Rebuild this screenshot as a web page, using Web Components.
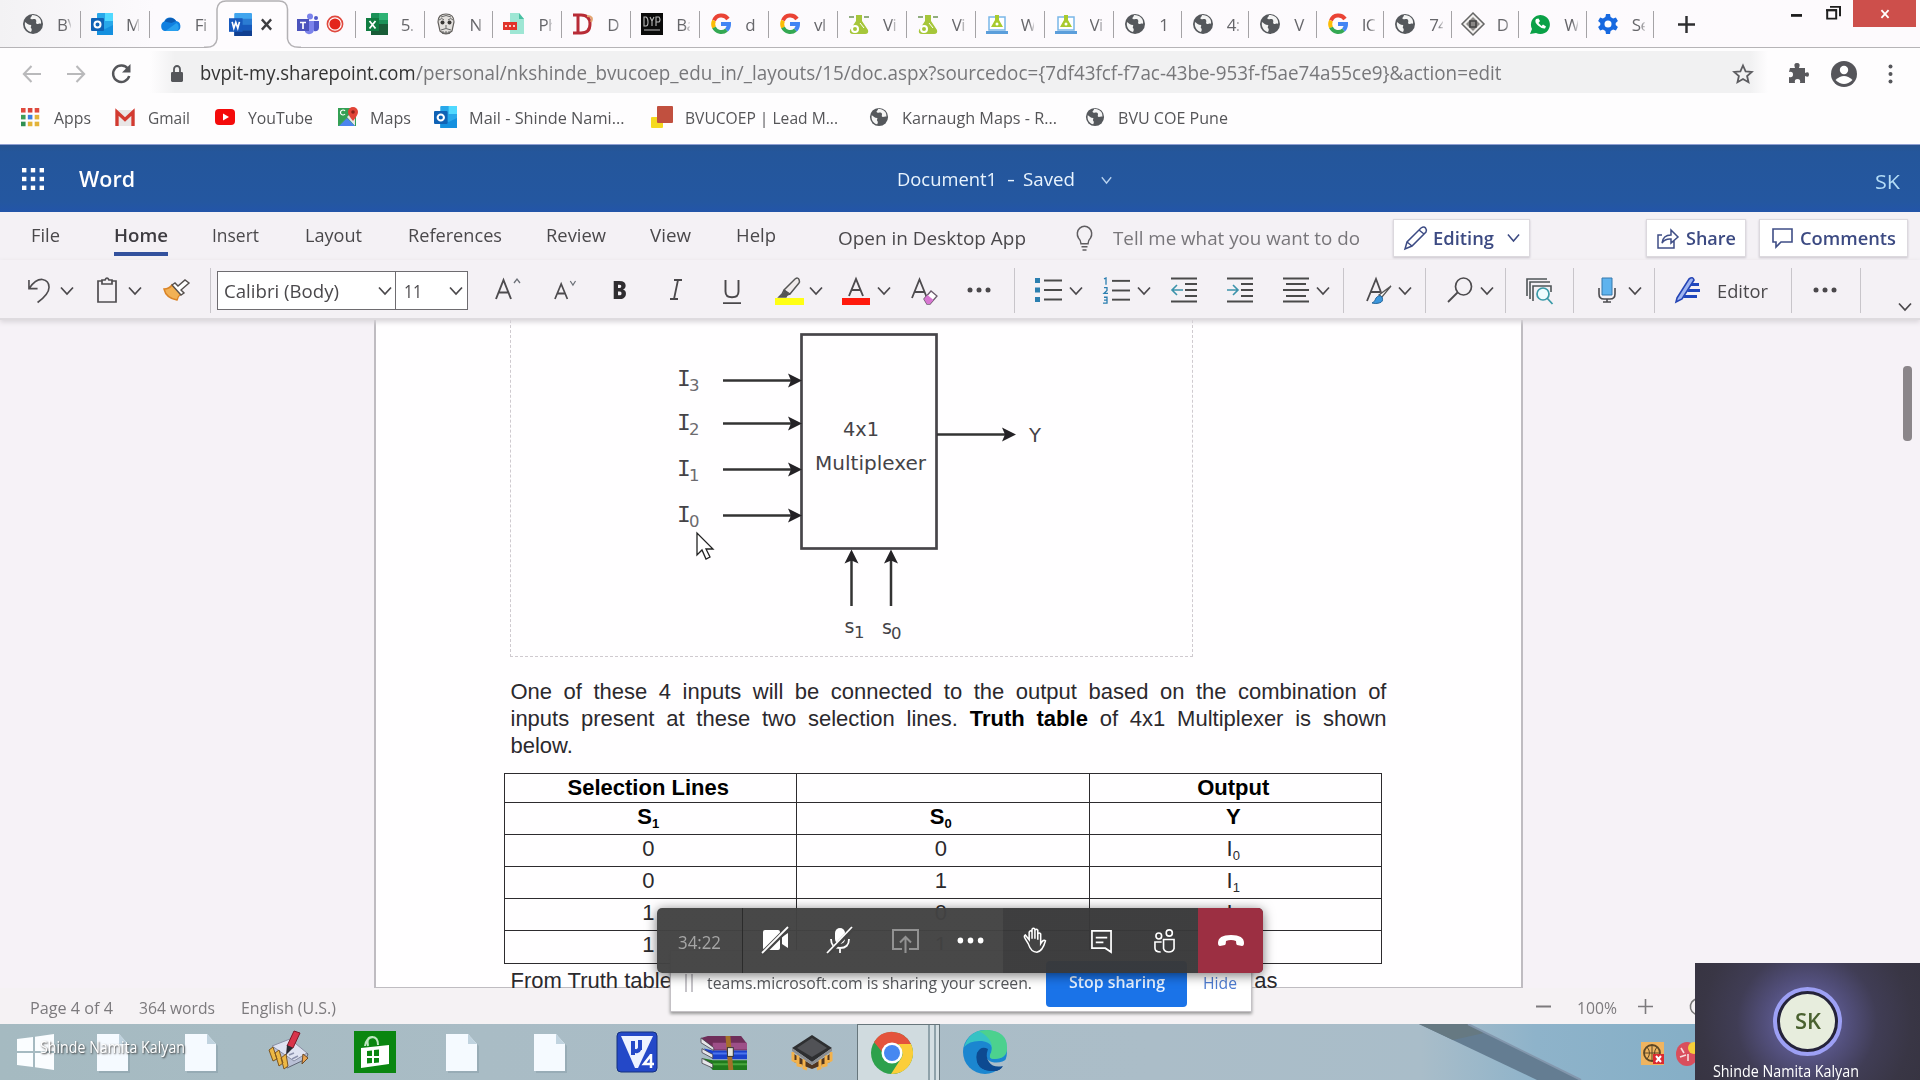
<!DOCTYPE html>
<html lang="en">
<head>
<meta charset="utf-8">
<title>Document1 - Word</title>
<style>
html,body{margin:0;padding:0;width:1920px;height:1080px;overflow:hidden;background:#f5f1f5}
body{font-family:"Open Sans","Noto Sans",sans-serif}
</style>
</head>
<body>
<desktop-screen></desktop-screen>
<script>
/* Icon artwork: [viewBox width, viewBox height, markup] */
const chev='<path d="M1 1.5L7 8L13 1.5" fill="none" stroke="currentColor" stroke-width="1.7"/>';
const lines=(x,w,c='#4a4a4a')=>`<g stroke="${c}" stroke-width="2">`+w.map((l,i)=>`<path d="M${x+(l[0]||0)} ${l[1]}h${l[2]}"/>`).join('')+'</g>';
const globe='<circle cx="11" cy="11" r="10" fill="#55585c"/><path d="M3 9c2 1 3 3 6 3 1 1-1 2 0 3 1 1 1 2 0 4-4-1-7-5-6-10zM10 2c0 2-3 3-1 4 2 1 4-1 5 1s-1 3 1 4c2 0 3-1 4 0 1-5-3-9-9-9z" fill="#f4f4f4"/>';
const google='<g fill="none" stroke-width="4"><path d="M18 6A8 8 0 0 0 4 7.500" stroke="#ea4335"/><path d="M4 7.500a8 8 0 0 0 0 7" stroke="#fbbc05"/><path d="M4 14.500A8 8 0 0 0 16.500 17" stroke="#34a853"/><path d="M16.500 17A8 8 0 0 0 19 11h-8" stroke="#4285f4"/></g>';
const outlook='<rect x="6" y="0" width="16" height="22" rx="1" fill="#28a8ea"/><path d="M14 0h8v8h-8z" fill="#50d9ff"/><path d="M6 12l8 4 8-4v10H6z" fill="#1490df"/><rect x="0" y="5" width="13" height="13" rx="1" fill="#0f62b5"/><circle cx="6.500" cy="11.500" r="3" fill="none" stroke="#fff" stroke-width="2"/>';
const flask='<path d="M8 2h6v6l6 9q1 4-3 4H5q-4 0-3-4l6-9z" fill="#a6c63a"/><path d="M1 4h5M16 4h5" stroke="#6d9455" stroke-width="1.500"/><circle cx="7" cy="16" r="3" fill="none" stroke="#fff" stroke-width="2"/><path d="M12 10l4 5" stroke="#fff"/>';
const laptop='<rect x="3" y="4" width="16" height="13" fill="#fff" stroke="#79b7e8" stroke-width="1.500"/><path d="M0 18h22v3H0z" fill="#5b9edb"/><path d="M9 2h4v5l4 7H5l4-7z" fill="#a8ca2e"/><circle cx="11" cy="11" r="1.500" fill="#fff"/>';
const doc='<path d="M2 2h22l9 10v27H2z" fill="#8298a5" opacity=".45"/><path d="M0 0h22l9 10v27H0z" fill="#f5faff"/><path d="M22 0v10h9z" fill="#c0d3df"/>';
const ICONS={
 globe:[22,22,globe], google:[22,22,google], outlook:[22,22,outlook], flask:[22,22,flask], laptop:[22,22,laptop],
 onedrive:[24,22,'<path d="M5 18a5 5 0 0 1-.5-9.500A7.500 7.500 0 0 1 17.500 8 5.200 5.200 0 0 1 19 18z" fill="#0f7fe0"/><path d="M5 8.500a7.500 7.500 0 0 1 12.500-.5l-5 2z" fill="#0b5cb4"/><path d="M6 18l12-8a5.200 5.200 0 0 1 1 8z" fill="#28a0ee"/>'],
 word:[22,22,'<rect x="5" width="17" height="22" rx="1" fill="#41a5ee"/><path d="M5 5.500h17V11H5z" fill="#2b7cd3"/><path d="M5 11h17v5.500H5z" fill="#185abd"/><path d="M5 16.500h17V22H5z" fill="#103f91"/><rect y="5" width="13" height="13" fill="#185abd"/><path d="M3 8.500l1.600 6 1.900-5.500 1.900 5.500 1.600-6" fill="none" stroke="#fff" stroke-width="1.600"/>'],
 teams:[22,22,'<circle cx="13" cy="3.500" r="3" fill="#7b83eb"/><circle cx="19" cy="5" r="2" fill="#5059c9"/><path d="M8 8h9v9a5 5 0 0 1-9 2z" fill="#7b83eb"/><path d="M17 8h5v7q-1 4-5 3z" fill="#5059c9"/><rect y="6" width="12" height="12" fill="#4b53bc"/><path d="M3 9.500h6M6 9.500v6.500" stroke="#fff" stroke-width="1.700"/>'],
 rec:[18,18,'<circle cx="9" cy="9" r="7.600" fill="#fff" stroke="#e0483e" stroke-width="1.600"/><circle cx="9" cy="9" r="5.600" fill="#e3261c"/>'],
 excel:[22,22,'<rect x="5" width="17" height="22" rx="1" fill="#1b9158"/><path d="M13 0h9v7h-9z" fill="#2eb274"/><path d="M5 11h17v11H5z" fill="#185c37"/><rect y="5" width="13" height="13" fill="#107c41"/><path d="M3.500 8l6 7.500M9.500 8l-6 7.500" stroke="#fff" stroke-width="1.800"/>'],
 face:[22,22,'<path d="M3 9q0-8 8-8t8 8l-2 9q-6 6-12 0z" fill="#e4e1de" stroke="#625f5c" stroke-width="1.200"/><circle cx="7.500" cy="9.500" r="2" fill="#3a3836"/><circle cx="14.500" cy="9.500" r="2" fill="#3a3836"/><path d="M11 12v3M6 17q5-3 10 0M7 20h8M6 4q5-3 10 0M4 7q3-3 5 0M13 7q3-3 5 0M8 18v3M11 18v3M14 18v3" fill="none" stroke="#666" stroke-width="1"/>'],
 pdf:[22,22,'<path d="M7 0h9l5 6v15H7z" fill="#9ee6d4"/><path d="M16 0l5 6h-5z" fill="#49bfa2"/><rect y="9" width="14" height="8" fill="#e1342b"/><path d="M2 13h2M6 13h2M10 13h2" stroke="#fff" stroke-width="1.500"/>'],
 bigD:[22,22,'<path d="M1 2h8q9 0 9 9t-9 9H1M6 2v18" fill="none" stroke="#b82b36" stroke-width="3"/><path d="M15 3q7 0 4 6" fill="none" stroke="#e2a36f" stroke-width="2"/>'],
 dyp:[22,22,'<rect width="22" height="22" fill="#0a0a0a"/><path d="M3 4v9h2q2 0 2-4t-2-5zM9 4l2 4 2-4M11 8v5M15 13V4h3q2 3 0 5h-3M3 17h16" stroke="#b9b9b9" fill="none" stroke-width="1.100"/>'],
 diamond:[22,22,'<path d="M11 0l11 11-11 11L0 11z" fill="#f1efee" stroke="#666" stroke-width="1.500"/><path d="M11 4l7 7-7 7-7-7z" fill="#8a8886"/><path d="M8 8h6v6H8z" fill="none" stroke="#444" stroke-width="1.600"/>'],
 whatsapp:[22,22,'<path d="M1 21l2-5a9.500 9.500 0 1 1 4 4z" fill="#0aa147"/><path d="M7 6q-2 3 2 6.500t7 3l1-2-3-2-1.500 1.500-3-3L11 8 9.500 5.500z" fill="#fff"/>'],
 gear:[22,22,'<path d="M9 1h4l.6 3 2.500 1.400 2.800-1 2 3.500L18.700 10v2l2.200 2-2 3.600-2.800-1-2.500 1.400-.6 3H9l-.6-3-2.500-1.400-2.800 1-2-3.500L3.300 12v-2L1.100 8l2-3.600 2.800 1L8.400 4z" fill="#1769e0"/><circle cx="11" cy="11" r="3.500" fill="#fff"/>'],
 plus:[18,18,'<path d="M9 0v18M0 9h18" stroke="currentColor" stroke-width="2.600"/>'],
 plusThin:[15,15,'<path d="M7.500 0v15M0 7.500h15" stroke="currentColor" stroke-width="1.600"/>'],
 close:[14,14,'<path d="M2 1.500l10 11M12 1.500L2 12.500" stroke="currentColor" stroke-width="2.500"/>'],
 min:[12,12,'<path d="M0 7h12" stroke="#1b1b1b" stroke-width="3"/>'],
 restore:[15,15,'<path d="M1.200 4.500h9v9h-9zM4 1h10v10" fill="none" stroke="#1f1f1f" stroke-width="2"/><path d="M0 4.500h11" stroke="#1f1f1f" stroke-width="2"/>'],
 back:[20,20,'<path d="M20 10H2M10 2l-8 8 8 8" fill="none" stroke="#b9b9bb" stroke-width="2.200"/>'],
 fwd:[20,20,'<path d="M0 10h18M10 2l8 8-8 8" fill="none" stroke="#b9b9bb" stroke-width="2.200"/>'],
 reload:[20,20,'<path d="M17 5a8.200 8.200 0 1 0 1.200 7" fill="none" stroke="#55565a" stroke-width="2.500"/><path d="M19.500 0v8.500H11z" fill="#55565a"/>'],
 lock:[12,16,'<path d="M3 7V4a3 3 0 0 1 6 0v3" fill="none" stroke="#54565a" stroke-width="1.800"/><rect y="6.500" width="12" height="9.500" rx="1.300" fill="#54565a"/>'],
 star:[20,20,'<path d="M10 1.500l2.600 5.800 6.200.6-4.700 4.100 1.400 6.200L10 15l-5.500 3.200 1.400-6.200L1.200 7.900l6.200-.6z" fill="none" stroke="#5c5c60" stroke-width="1.800"/>'],
 puzzle:[21,21,'<path d="M2 5h5q-2-5 2-5t2 5h6v5q4-2 4 1.500T17 13v7h-5q1-4-2.500-4T7 20H1v-6q4 1 4-2.500T1 9z" fill="#59595d"/>'],
 person:[26,26,'<circle cx="13" cy="13" r="13" fill="#55555a"/><circle cx="13" cy="9" r="4.200" fill="#fff"/><path d="M4.500 19q8.500-8 17 0-8.500 8-17 0z" fill="#fff"/>'],
 vdots:[5,20,'<g fill="#55565a"><circle cx="2.500" cy="2.500" r="2"/><circle cx="2.500" cy="10" r="2"/><circle cx="2.500" cy="17.500" r="2"/></g>'],
 apps:[20,20,['#e04b3f','#d9453b','#e04b3f','#3f9d58','#3c7fe0','#e3b33a','#2f8f52','#e3b33a','#e3b33a'].map((c,i)=>`<rect x="${(i%3)*7.200}" y="${(i/3|0)*7.200}" width="4.800" height="4.800" fill="${c}"/>`).join('')],
 gmail:[20,16,'<rect width="20" height="16" rx="1" fill="#e9e6e6"/><path d="M2 16V2l8 7.500L18 2v14" fill="none" stroke="#d33a30" stroke-width="3.300"/>'],
 youtube:[20,16,'<rect width="20" height="16" rx="4" fill="#f40b0b"/><path d="M8 4.500v7l6-3.500z" fill="#fff"/>'],
 maps:[20,20,'<rect y="1" width="18" height="18" fill="#34a054"/><path d="M0 19L17 2v17L9 10z" fill="#e6e6e6"/><path d="M1 19l8-8 8 8z" fill="#4c84ee"/><path d="M15 14q-5-6-5-9a5 5 0 0 1 10 0q0 3-5 9z" fill="#e14437"/><circle cx="15" cy="5" r="1.800" fill="#8c2119"/><path d="M7 4a2.500 2.500 0 1 0 0 3" fill="none" stroke="#fff" stroke-width="1.200"/>'],
 lead:[22,22,'<rect y="11" width="12" height="11" rx="1" fill="#f5d91f"/><rect x="6" width="16" height="17" rx="1" fill="#c1503f"/>'],
 waffle:[22,22,[0,1,2,3,4,5,6,7,8].map(i=>`<rect x="${(i%3)*8.800}" y="${(i/3|0)*8.800}" width="4.400" height="4.400" fill="#fff"/>`).join('')],
 chev:[14,9,chev],
 bulb:[17,24,'<path d="M5 17q0-3-2.500-5.500A7.200 7.200 0 1 1 14.500 11.500Q12 14 12 17zM5.500 20h6M6.500 23h4" fill="none" stroke="#5f5d60" stroke-width="1.500"/>'],
 pencil:[23,24,'<path d="M1 23l2-7L17 2q3-2 4.500 0t.5 4L8 20zM3 16l5 4M15 4l5 4" fill="none" stroke="#3c4b84" stroke-width="1.500"/>'],
 share:[22,22,'<path d="M5 8H1v13h16v-7M5 16q1-8 9-8V3l7 7-7 6v-4q-6-.5-9 4z" fill="none" stroke="#3f4e86" stroke-width="1.500"/>'],
 comment:[21,20,'<path d="M1 1h19v13H9l-5 5v-5H1z" fill="none" stroke="#3f4e86" stroke-width="1.600"/>'],
 undo:[23,26,'<path d="M1 2v9h9M1.500 10.500Q8 1 15 1.500q7 1 7 8 0 7-12 16" fill="none" stroke="#4f4d50" stroke-width="1.700"/>'],
 clip:[20,26,'<path d="M5 4H1v21h18V4h-4M5 7V3h3q2-4 4 0h3v4z" fill="none" stroke="#4f4d50" stroke-width="1.700"/>'],
 brush:[27,22,'<path d="M1 10q5 0 8-4l9 9q-3 2-4 6Q3 19 1 10z" fill="#f2b155" stroke="#da8427" stroke-width="1.500"/><path d="M9 6l3-2 3 3 7-6 4 3-8 7 3 3-3 2z" fill="#fff" stroke="#55504e" stroke-width="1.400"/>'],
 bigA:[25,22,'<path d="M1 21L8.500 2 16 21M3.500 14.500h10" fill="none" stroke="#4d4b4e" stroke-width="1.900"/><path d="M19 5l3-4 3 4" fill="none" stroke="#6b7077" stroke-width="1.300"/>'],
 smallA:[23,20,'<path d="M1 19L7.500 4 14 19M3.500 13.500h8" fill="none" stroke="#4d4b4e" stroke-width="1.800"/><path d="M17 1l2.800 4L22.500 1" fill="none" stroke="#6b7077" stroke-width="1.300"/>'],
 ital:[12,21,'<path d="M4 1h8M0 20h8M8 1L4 20" fill="none" stroke="#4a484b" stroke-width="1.800"/>'],
 under:[18,26,'<path d="M2.500 1v12q0 6 6.500 6t6.500-6V1M0 25h18" fill="none" stroke="#4a484b" stroke-width="1.900"/>'],
 hilite:[29,28,'<path d="M9 13L20 2q3-2 4 .5T24 6L15 17zM9 13l-2 4-3 3h7l1-2 3-1" fill="#efeaea" stroke="#555" stroke-width="1.500"/><path d="M10 13l-5 7h6l3-3z" fill="#555"/><path d="M0 21h29v7H0z" fill="#ffff14"/>'],
 fcolor:[28,28,'<path d="M7 19L14 2l7 17M9.500 13h9" fill="none" stroke="#4d4b4e" stroke-width="1.900"/><path d="M0 21h28v7H0z" fill="#ff1a0d"/>'],
 clearf:[27,27,'<path d="M1 20L8.500 1.500 16 20M3.500 14h10" fill="none" stroke="#4d4b4e" stroke-width="1.800"/><path d="M13 21l7-8 6 5-7 8h-3z" fill="#fff" stroke="#6b5b6c" stroke-width="1.300"/><path d="M13 21l3.500-4 6 5-3.500 4h-3z" fill="#d877d2"/>'],
 dots:[24,6,'<g fill="currentColor"><circle cx="3" cy="3" r="2.500"/><circle cx="12" cy="3" r="2.500"/><circle cx="21" cy="3" r="2.500"/></g>'],
 bullets:[27,24,'<g fill="#2b7fb0"><path d="M0 0h5v5H0zM0 9.500h5v5H0zM0 19h5v5H0z"/></g>'+lines(9,[[0,2.5,18],[0,12,18],[0,21.5,18]])],
 numbers:[27,28,'<g fill="none" stroke="#2b7fb0" stroke-width="1.300"><path d="M1 2l2-1v7M1 11h3v3l-3 3h4M1 21h3v3H1m3 0v3H0"/></g>'+lines(9,[[0,4,18],[0,14,18],[0,23.5,18]])],
 outdent:[26,26,lines(0,[[0,1.5,26],[14,7,12],[14,13,12],[14,19,12],[0,24.5,26]])+'<path d="M12 13H1M6 8l-5 5 5 5" fill="none" stroke="#3c93ab" stroke-width="1.600"/>'],
 indent:[26,26,lines(0,[[0,1.5,26],[14,7,12],[14,13,12],[14,19,12],[0,24.5,26]])+'<path d="M0 13h11M6 8l5 5-5 5" fill="none" stroke="#3c93ab" stroke-width="1.600"/>'],
 align:[26,26,lines(0,[[0,1.5,26],[3,7,20],[0,13,26],[3,19,20],[0,24.5,26]])],
 styles:[26,28,'<path d="M1 24L10 2l6 16M5 15h9" fill="none" stroke="#4d4b4e" stroke-width="1.800"/><path d="M25 9l-9 11-3-2z" fill="#fff" stroke="#555" stroke-width="1.300"/><path d="M6 26q3-1 4-5 3-4 6-1 2 5-3 6-3 1-7 0z" fill="#3b97dd" stroke="#26679c"/>'],
 search:[25,26,'<ellipse cx="16.500" cy="9.500" rx="8" ry="8.500" fill="none" stroke="#4d4b4e" stroke-width="1.700"/><path d="M10.500 15.500L1 25" stroke="#4d4b4e" stroke-width="1.800"/>'],
 finddoc:[27,27,'<path d="M1 18V1h20M4 21V4h20M7 23V8h18v6" fill="none" stroke="#4f5558" stroke-width="1.600"/><circle cx="17" cy="16" r="6" fill="#eefcff" stroke="#3a9aa8" stroke-width="1.700"/><path d="M21 20l5.500 6" stroke="#3a9aa8" stroke-width="1.800"/>'],
 mic:[18,26,'<path d="M4 1h10v17H4z" fill="#5fb3ee" stroke="#3579ad"/><path d="M1 11v6q0 5 5 5h6q5 0 5-5v-6M9 22v3M5 25h8" fill="none" stroke="#4c4c50" stroke-width="1.600"/>'],
 editor:[26,26,'<path d="M2 21L14 2q4-3 5 1L7 22l-6 3z" fill="#9fb5f2" stroke="#2545b5" stroke-width="1.600"/><path d="M17 6h7v3h-9zM14 12h11v3H12zM10 18h12v3H8z" fill="#2047bd"/>'],
 minus:[15,15,'<path d="M0 7.500h15" stroke="currentColor" stroke-width="2"/>'],
 reset:[20,20,'<path d="M16 4A8 8 0 1 0 18 12h-6" fill="none" stroke="#777" stroke-width="1.500"/>'],
 win:[37,36,'<g fill="#fafdff"><path d="M0 5l16-2v14H0zM18 2.700L37 0v17H18zM0 19h16v14L0 31zM18 19h19v17l-19-2.700z"/></g>'],
 doc:[34,40,doc],
 paint:[42,40,'<path d="M2 19l17-9 21 13-2 5-19 9z" fill="#b9c0d6" stroke="#5f6575"/><path d="M4 15l18-7 17 14-13 8z" fill="#dfe3f2" stroke="#8a90a5"/><path d="M21 24l5-2M24 28l6-3" stroke="#8d93ae" stroke-width="1.500"/><path d="M1 19l4-3 4 12-4 2zM7 22l4-3 4 13-4 3zM13 27l5-4 2 12-4 3z" fill="#edb844" stroke="#7d5520"/><path d="M35 23l5 4-6 6z" fill="#e9a552" stroke="#6e4b28"/><path d="M26 0l6 2-7 15-6-2z" fill="#d8344a" stroke="#7c1827"/><path d="M19 14l6 3-7 7z" fill="#292a33"/>'],
 store:[42,42,'<rect width="42" height="42" fill="#0a8610"/><path d="M14 15q-2-9 4-9t6 8M11 15q1-8 8-9" fill="none" stroke="#bfe7c1" stroke-width="2"/><path d="M7 17l28-3v19l-28 4z" fill="#fff"/><path d="M13 20l5-.6V25h-5zM20 19l5-.6V25h-5zM13 27h5v5l-5 .5zM20 27h5v4.500l-5 .5z" fill="#0a8610"/>'],
 v4:[40,40,'<rect width="40" height="40" rx="4" fill="#2448c8" stroke="#14307f"/><path d="M4 4h32L21 36h-3z" fill="#eef2ff"/><path d="M16 9v14M16 18q5 3 7-2M23 8v10" stroke="#2448c8" stroke-width="4" fill="none"/><path d="M34 22v14M34 23l-7 9h10" stroke="#fff" stroke-width="2.500" fill="none"/>'],
 rar:[47,36,'<path d="M7 1h34l6 8v7H13zM0 3l7-2 7 9v6z" fill="#6f2e5a"/><path d="M12 8h35v7H12z" fill="#9d4f88"/><path d="M3 14l9 2h35v9H12z" fill="#1a41cc"/><path d="M12 19h35" stroke="#4b74ec" stroke-width="2"/><path d="M2 24l10 2h35v10H12z" fill="#1f7b1d"/><path d="M12 30h35" stroke="#48a63e" stroke-width="2"/><path d="M0 3l13 10v3L0 8zM1 14l11 6v4L1 18zM1 24l11 6v4L1 29z" fill="#e5e5e9" stroke="#44404c" stroke-width=".8"/><path d="M25 1h5l3 35h-5z" fill="#a5702a"/><rect x="27" y="13" width="6" height="9" fill="#e5e5dc" stroke="#333"/>'],
 chip:[42,36,'<path d="M3 19l18 11 18-11v8l-18 7L3 27z" fill="#513620"/><path d="M2 17v8l4 2M7 20v10l4 1M13 24v9l3 1M40 17v8l-4 2M35 20v10l-4 1M29 24v9l-3 1" fill="none" stroke="#f3b24c" stroke-width="3"/><path d="M21 0l20 13-20 14L1 13z" fill="#2e2f31"/><path d="M21 3l15 10-15 9-15-9z" fill="#515256"/><path d="M1 13l20 14 20-14v3L21 30 1 16z" fill="#8b8d90"/>'],
 chrome:[42,42,'<circle cx="21" cy="21" r="21" fill="#2da14c"/><path d="M3 10a21 21 0 0 1 37 2H21l-9 9z" fill="#e4533c"/><path d="M40 12A21 21 0 0 1 20 42l11-17q2-7-4-13z" fill="#fbce3a"/><circle cx="21" cy="21" r="10.500" fill="#fff"/><circle cx="21" cy="21" r="8" fill="#4688f1"/>'],
 edge:[46,46,'<circle cx="23" cy="23" r="22" fill="#1b86d0"/><path d="M2 18Q8 0 25 1q20 1 20 18 0 11-13 11-5 0-4-4 6-12-8-14Q8 11 2 18z" fill="#37c2c4"/><path d="M25 1q20 1 20 18 0 11-13 11-5 0-4-4Q35 12 17 2z" fill="#54d67c" opacity=".75"/><path d="M15 24q-3 18 17 18 6 0 9-5-7 5-14 0-6-5-4-11 0-7-8-2z" fill="#0d3f82"/><path d="M25 20q-4 10 5 13 9 2 16-4v9l-5 0q-8 3-13-2-8-6-3-16z" fill="#abbeca"/><path d="M15 24q-3 18 17 18 6 0 9-5-10 2-14-4-4-5-1-13-7-4-11 4z" fill="#0d4a91"/>'],
 tray1:[23,23,'<rect width="23" height="23" fill="#efb460"/><circle cx="11" cy="11" r="8" fill="none" stroke="#5c4726" stroke-width="1.800"/><path d="M3 11h16M11 3v16M6 5q5 6 0 12M16 5q-5 6 0 12" fill="none" stroke="#5c4726"/><rect x="12" y="12" width="11" height="10" fill="#db2a31"/><path d="M15 14l5 6M20 14l-5 6" stroke="#fff" stroke-width="2"/>'],
 tray2:[22,24,'<ellipse cx="11" cy="12" rx="11" ry="12" fill="#d94e5c"/><path d="M5 6l3 5M4 15l6-2M12 12v7" stroke="#f6dcdc" stroke-width="1.600"/><circle cx="18" cy="6" r="6" fill="#f5cf3a"/>'],
 camoff:[27,27,'<path d="M1 5q0-2 2-2h13q2 0 2 2v16q0 2-2 2H3q-2 0-2-2zM20 10l6-4v15l-6-4z" fill="#fff"/><path d="M0 27L27 0" stroke="#444" stroke-width="5"/><path d="M0 26L26 0" stroke="#fff" stroke-width="1.800"/>'],
 micoff:[26,27,'<rect x="8" y="1" width="10" height="16" rx="5" fill="#fff"/><path d="M4 12q0 9 9 9t9-9M13 21v5" fill="none" stroke="#fff" stroke-width="1.800"/><path d="M1 27L26 1" stroke="#444" stroke-width="4"/><path d="M0 26L25 0" stroke="#fff" stroke-width="1.800"/>'],
 present:[27,24,'<path d="M10 20H1V1h25v19h-9M13.500 24V8M8 13.500L13.500 8l5.500 5.500" fill="none" stroke="#929292" stroke-width="2"/>'],
 hand:[22,27,'<path d="M5 17L2 12q-2-3 0-4l4 5V5q1.500-3 3 0v7V2q1.500-2 3 0v10V3q1.500-2 3 0v10V7q1.500-2 3 0v10q3-5 5-3-3 11-9 12-6 0-9-9z" fill="#444" stroke="#fff" stroke-width="1.600" transform="translate(-.6 .3) scale(.96)"/>'],
 chat:[22,24,'<path d="M1 1h20v22l-6-4H1zM5 8h12M5 13h8" fill="none" stroke="#fff" stroke-width="1.800"/>'],
 people:[22,24,'<circle cx="5" cy="7" r="3" fill="none" stroke="#fff" stroke-width="1.700"/><circle cx="16" cy="4" r="3.200" fill="none" stroke="#fff" stroke-width="1.700"/><path d="M8 13H1v6q0 4 6 4M10 10.500h11v9q-1 3.500-5.500 3.500T10 19.500z" fill="none" stroke="#fff" stroke-width="1.700"/>'],
 hang:[26,11,'<path d="M0 8Q0 0 13 0t13 8q0 3-2 3l-5-1q-1-1-1-4-5-2-10 0 0 3-1 4l-5 1q-2 0-2-3z" fill="#fff"/>'],
 cursor:[18,28,'<path d="M1 1v22l5-5 4 9 4-2-4-8h7z" fill="#fff" stroke="#222" stroke-width="1.300"/>']
};

/* Registers an element whose shadow tree comes from a template string */
function define(name,css,html){
  const t=document.createElement('template');
  t.innerHTML=`<style>:host{display:block;box-sizing:border-box}*{box-sizing:border-box}.r{display:flex;align-items:center;height:100%}.c{flex:none;display:flex;align-items:center}${css}</style>${html}`;
  customElements.define(name,class extends HTMLElement{
    connectedCallback(){
      if(this.shadowRoot)return;
      this.attachShadow({mode:'open'}).append(t.content.cloneNode(true));
    }
  });
}

customElements.define('ui-icon',class extends HTMLElement{
  connectedCallback(){
    if(this.shadowRoot)return;
    const [w,h,m]=ICONS[this.getAttribute('name')];
    const W=this.getAttribute('w')||w,H=this.getAttribute('h')||h;
    this.attachShadow({mode:'open'}).innerHTML=`<style>:host{display:block;flex:none;width:${W}px;height:${H}px}svg{display:block;overflow:visible}</style><svg width="${W}" height="${H}" viewBox="0 0 ${w} ${h}" preserveAspectRatio="none">${m}</svg>`;
  }
});

/* Single-line label condensed or widened to a given width */
customElements.define('fit-text',class extends HTMLElement{
  connectedCallback(){
    if(this.shadowRoot)return;
    this.attachShadow({mode:'open'}).innerHTML='<style>:host{display:block;flex:none;white-space:pre}span{display:inline-block;font-size:1.04em;transform-origin:0 50%}</style><span><slot></slot></span>';
    const w=+this.getAttribute('w'),s=this.shadowRoot.querySelector('span');
    if(w){this.style.width=w+'px';s.style.transform=`scaleX(${(w/s.getBoundingClientRect().width).toFixed(4)})`;}
  }
});

/* Flex row from [left edge, width, markup, vertical nudge] items */
const row=(items,start=0)=>{let p=start;return '<div class="r">'+items.map(([x,w,m,dy])=>{const g=x-p;p=x+w;return `<div class="c" style="margin-left:${g.toFixed(1)}px;width:${w}px${dy?`;margin-top:${dy*2}px`:''}">${m}</div>`;}).join('')+'</div>';};
const T=(x,w,s,cls='',dy=0)=>[x,w,`<fit-text w="${w}" class="${cls}">${s}</fit-text>`,dy];
const I=(x,w,h,n,dy=0)=>[x,w,`<ui-icon name="${n}" w="${w}" h="${h}"></ui-icon>`,dy];
const sep=x=>[x,1,'<i class="sep"></i>'];
const cv=(x,dy=0)=>I(x,14,9,'chev',dy);

/* Browser chrome */
customElements.define('browser-tab',class extends HTMLElement{
  connectedCallback(){
    if(this.shadowRoot)return;
    const w=this.getAttribute('w');
    this.attachShadow({mode:'open'}).innerHTML=`<style>:host{display:flex;align-items:center;flex:none;width:${w}px;height:27px;border-right:1px solid #a5a3a6;box-sizing:border-box;padding-left:10px;font-size:17px;color:#66666a}.l{width:13.500px;margin-left:13px;overflow:hidden;white-space:nowrap;letter-spacing:-.6px;-webkit-mask-image:linear-gradient(90deg,#000 60%,rgba(0,0,0,.25))}</style><ui-icon name="${this.getAttribute('icon')}" w="22" h="22"></ui-icon><div class="l"><slot></slot></div>`;
  }
});
const tab=(i,t,w=68.9)=>`<browser-tab icon="${i}" w="${w}">${t}</browser-tab>`;
define('tab-strip',`:host{height:48px;background:linear-gradient(90deg,#f3f2f4,#fcfafd 8%,#fdfafd);border-bottom:1.500px solid #b6b4b7;position:relative}
.s{display:flex;align-items:center;height:48px;padding-left:12px}
.act{width:69px;height:48px;flex:none;display:flex;align-items:center;padding-left:11px;gap:8px;position:relative;color:#3d3d40}
.act svg{position:absolute;left:-14px;top:0}.act ui-icon{position:relative}
.tm{width:68.900px;height:27px;flex:none;display:flex;align-items:center;padding-left:10px;gap:7px;border-right:1px solid #a5a3a6}
.add{margin-left:24px;color:#2e2e30}.ctl{margin-left:auto;display:flex;align-items:flex-start;height:48px}
.x{width:63px;height:27px;background:#cd4f4b;color:#fff;display:flex;align-items:center;justify-content:center;margin:0 4px 0 12px}`,
`<div class="s">${tab('globe','BV')}${tab('outlook','Ma')}<browser-tab icon="onedrive" w="68" style="border-color:transparent">Fi</browser-tab><div class="act"><svg width="97" height="49"><path d="M-1 47.500Q12 48 13 39V9Q14 1 22 1H75Q83 1 83.500 9V39Q85 48 98 47.500V50H-1z" fill="#fefcfe"/><path d="M0 47.300Q12 48 13 39V9Q14 1 22 1H75Q83 1 83.500 9V39Q85 48 97 47.300" fill="none" stroke="#b3b1b4" stroke-width="1.500"/></svg><ui-icon name="word" w="23" h="23"></ui-icon><ui-icon name="close" w="13" h="13"></ui-icon></div><div class="tm"><ui-icon name="teams" w="22" h="22"></ui-icon><ui-icon name="rec"></ui-icon></div>${tab('excel','5.')}${tab('face','N')}${tab('pdf','Ph')}${tab('bigD','D')}${tab('dyp','Ba')}${tab('google','d')}${tab('google','vl')}${tab('flask','Vi')}${tab('flask','Vi')}${tab('laptop','W')}${tab('laptop','Vi',69.6)}${tab('globe','1',67.5)}${tab('globe','4:',67.5)}${tab('globe','V',67.5)}${tab('google','IC',67.5)}${tab('globe','74',67.5)}${tab('diamond','D',67.5)}${tab('whatsapp','W',67.5)}${tab('gear','Se',67.5)}<ui-icon class="add" name="plus" w="17" h="17"></ui-icon>
<div class="ctl"><ui-icon name="min" w="11" h="11" style="margin-top:9px"></ui-icon><ui-icon name="restore" w="15" h="14" style="margin:6px 0 0 24px"></ui-icon><div class="x"><ui-icon name="close" w="10" h="10"></ui-icon></div></div></div>`);
define('address-bar',`:host{height:50px;background:linear-gradient(90deg,transparent 150px,#f1f1f2 175px,#f1f1f2 1750px,transparent 1768px) 0 3px/100% 42px no-repeat,#fefdfe;font-size:18.500px;color:#77777a}.d{color:#333}`,
row([I(22,19,20,'back',.5),I(67,19,20,'fwd',.5),I(111,20,20,'reload',.5),I(171,12,17,'lock',0),T(200,215.5,'bvpit-my.sharepoint.com','d',-.5),T(415.5,1085.5,'/personal/nkshinde_bvucoep_edu_in/_layouts/15/doc.aspx?sourcedoc={7df43fcf-f7ac-43be-953f-f5ae74a55ce9}&amp;action=edit','',-.5),I(1733,20,20,'star',.5),I(1788,21,21,'puzzle',.5),I(1831,26,26,'person',.5),I(1888,5,20,'vdots',.5)]));
define('bookmarks-bar',`:host{height:47px;padding-bottom:7.500px;background:#fefdfe;border-bottom:1.500px solid #8f9fd2;font-size:16.500px;color:#555558}`,
row([I(21,19,19,'apps'),T(54,37,'Apps'),I(115,20,16,'gmail',.5),T(148,42,'Gmail'),I(215,20,16,'youtube'),T(248,65,'YouTube'),I(338,20,20,'maps'),T(370,41,'Maps'),I(434,23,22,'outlook'),T(468.5,155.5,'Mail - Shinde Nami...'),I(651,22,22,'lead'),T(685,153,'BVUCOEP | Lead M...'),I(869,20,20,'globe'),T(901.5,155,'Karnaugh Maps - R...'),I(1085,20,20,'globe'),T(1118,110,'BVU COE Pune')]));

/* Word chrome */
define('word-header',`:host{height:67px;background:linear-gradient(#28538f,#24569b 10%,#2457a0 85%,#2355a9);color:#e9f4fe;font-size:17.500px}.w{font-size:20px;font-weight:600;color:#fff}.sk{color:#b3dcf6;font-size:20px}.cc{color:#b9d3ef}`,
row([I(22,22,22,'waffle'),T(79,56,'Word','w',.5),T(897,100,'Document1','',0),T(1007,8,'-'),T(1023,52,'Saved','',0),[1101,12,'<ui-icon class="cc" name="chev" w="11" h="8"></ui-icon>',1.5],T(1875,25,'SK','sk',2)]));
const btn=(x,w,m)=>[x,w,`<div class="btn">${m}</div>`,1.5];
define('ribbon-tabs',`:host{height:48px;font-size:18px;color:#4a484b}.h{font-weight:600;color:#3d3b40;box-shadow:0 4px 0 #33519d;padding-bottom:5px;margin-top:4px}.g{color:#78767a}
.btn{display:flex;align-items:center;width:100%;height:38px;background:#fff;border:1px solid #dcd9de;box-shadow:0 1px 2px #c9c5cc;color:#3c4a82;font-weight:600;font-size:17.500px;padding-left:10px}`,
row([T(31,29,'File','',-1.5),T(114,54,'Home','h',-1),T(212,47,'Insert','',-1.5),T(305,57,'Layout','',-1.5),T(407.5,94,'References','',-1.5),T(546,60,'Review','',-1.5),T(650,41,'View','',-1.5),T(735.5,40,'Help','',-1.5),T(838,188,'Open in Desktop App','',1),I(1076,17,25,'bulb',2),T(1113,247,'Tell me what you want to do','g',1),
btn(1392.5,137,'<ui-icon name="pencil"></ui-icon><fit-text w="61" style="margin:0 13px 0 6px">Editing</fit-text><ui-icon name="chev" w="13"></ui-icon>'),
btn(1645.5,100,'<ui-icon name="share"></ui-icon><fit-text w="50" style="margin-left:7px">Share</fit-text>'),
btn(1758.5,149,'<ui-icon name="comment" style="margin-left:2px"></ui-icon><fit-text w="96" style="margin-left:7px">Comments</fit-text>')]));
define('ribbon-tools',`:host{height:60px;padding-top:2px;color:#4a484b;font-size:18px;border-bottom:2px solid #dedbdf;box-shadow:0 2px 5px #d8d4d9;position:relative;background:#f4f1f5}
.sep{width:1px;height:45px;background:#c8c5ca}.bb{font-weight:800;font-size:24px;color:#2f2d30}.bx{display:flex;align-items:center;width:100%;height:39px;background:#fff;border:1.500px solid #6e6c70}`,
row([I(28,22,25,'undo'),cv(60,.5),I(97,20,26,'clip'),cv(128,.5),I(163,27,22,'brush'),sep(210),
[217,179,'<div class="bx"><fit-text w="115" style="margin:0 39px 0 6px">Calibri (Body)</fit-text><ui-icon name="chev" w="14"></ui-icon></div>',.5],[396,72,'<div class="bx" style="border-left:0"><fit-text w="18" style="margin:0 27px 0 8px">11</fit-text><ui-icon name="chev" w="14"></ui-icon></div>',.5],
I(495,25,22,'bigA',-1),I(554,22,20,'smallA',-.5),T(612,15,'B','bb',-1),I(670,12,21,'ital',-1),I(723,18,25,'under',1),I(775,29,28,'hilite',1),cv(809),I(842,28,28,'fcolor',1),cv(877),I(911,27,27,'clearf',1),I(967,24,6,'dots'),sep(1014),I(1035,27,24,'bullets'),cv(1069),I(1103,27,27,'numbers'),cv(1137),I(1171,26,26,'outdent'),I(1227,26,26,'indent'),I(1283,26,26,'align'),cv(1316),sep(1343),I(1366,26,28,'styles',1),cv(1398),sep(1425),I(1447,25,26,'search'),cv(1480),sep(1505),I(1526,27,27,'finddoc',1),sep(1573),I(1598,18,26,'mic'),cv(1628),sep(1654),I(1675,26,26,'editor'),T(1717,51,'Editor'),sep(1791),I(1813,24,6,'dots'),sep(1860),cv(1898,16.5)]));

/* Document content */
const arrowR=(x,x2,y)=>`<path d="M${x} ${y}H${x2-6}" stroke="#333" stroke-width="2.500"/><path d="M${x2} ${y}l-14 -7 3 7-3 7z" fill="#242226"/>`;
const arrowU=x=>`<path d="M${x} 286V238" stroke="#333" stroke-width="2.500"/><path d="M${x} 229.500l-7 14 7-3 7 3z" fill="#242226"/>`;
const inp=(n,y)=>`<text class="i" x="166" y="${y}" font-size="23">I</text><text x="178" y="${y+4.500}" font-size="16.500" style="fill:#6c6a6e">${n}</text>`;
define('mux-diagram',`:host{width:683px;height:337px;border:1px dashed #cfcacf;border-top:0}svg{display:block}text{font-family:"DejaVu Sans",sans-serif;fill:#454347}.i{font-family:"Liberation Mono",monospace}`,
`<svg width="681" height="336"><rect x="290.500" y="14.500" width="135" height="214" fill="none" stroke="#474549" stroke-width="2.700"/>${arrowR(212,291,60.5)}${arrowR(212,291,103.5)}${arrowR(212,291,149.500)}${arrowR(212,291,195.500)}${arrowR(426,505,114.500)}${arrowU(340.500)}${arrowU(380)}${inp(3,66)}${inp(2,110)}${inp(1,156)}${inp(0,202)}
<text x="332" y="115.500" font-size="20" textLength="36" lengthAdjust="spacingAndGlyphs">4x1</text><text x="304" y="150" font-size="20" textLength="111" lengthAdjust="spacingAndGlyphs">Multiplexer</text><text x="518" y="122" font-size="19.500" textLength="12" lengthAdjust="spacingAndGlyphs">Y</text>
<text x="333.500" y="313" font-size="19">s</text><text x="343" y="318" font-size="16.500">1</text><text x="371" y="314" font-size="19">s</text><text x="380" y="319" font-size="16.500">0</text></svg>`);
define('truth-table',`:host{width:878px;color:#2b292d;font:22px "Liberation Sans",Arial,sans-serif}
.g{display:grid;grid-template-columns:292.500px 292.500px 292.500px;grid-template-rows:28.500px 32px 32.300px 32.300px 32.300px 32.300px;border:solid #2d2b2e;border-width:1.500px 0 0 1.500px}
.g div{border:solid #2d2b2e;border-width:0 1.500px 1.500px 0;text-align:center;line-height:27px;overflow:hidden;padding-right:4px}.g .b{font-weight:700;color:#000}.g sub{font-size:13px;line-height:0;vertical-align:-4px;font-weight:400}.g .b sub{font-weight:700}`,
`<div class="g"><div class="b">Selection Lines</div><div></div><div class="b">Output</div><div class="b">S<sub>1</sub></div><div class="b">S<sub>0</sub></div><div class="b">Y</div><div>0</div><div>0</div><div>I<sub>0</sub></div><div>0</div><div>1</div><div>I<sub>1</sub></div><div>1</div><div>0</div><div>I<sub>2</sub></div><div>1</div><div>1</div><div>I<sub>3</sub></div></div>`);
define('doc-page',`:host{width:1149px;height:668px;margin-left:373.500px;background:#fffeff;border:solid #bfbcc1;border-width:0 2px 1px;font:22px/27px "Liberation Sans",Arial,sans-serif;color:#2b292d}
mux-diagram{margin-left:134.500px}.p{margin:20.500px 0 0 135px;width:876px}.p div{text-align:justify;text-align-last:justify;white-space:nowrap;height:27px}.p .l{text-align-last:left}truth-table{margin:14.500px 0 0 128px}.e{margin:3px 0 0 135px;display:flex;width:767px;justify-content:space-between}b{color:#000}`,
`<mux-diagram></mux-diagram><div class="p"><div>One of these 4 inputs will be connected to the output based on the combination of</div><div>inputs present at these two selection lines. <b>Truth table</b> of 4x1 Multiplexer is shown</div><div class="l">below.</div></div><truth-table></truth-table><div class="e"><span>From Truth table</span><span>as</span></div>`);
define('doc-canvas',`:host{height:668px;background:#f6f2f7;display:flex;overflow:visible}.tr{margin:46px 8px 0 auto;width:9px;height:75px;border-radius:4px;background:#8b868a}`,
`<doc-page></doc-page><div class="tr"></div>`);
define('status-bar',`:host{height:36px;background:#f5f2f4;color:#7c7a7d;font-size:16px}`,
row([T(30,83,'Page 4 of 4','',1.5),T(139,76,'364 words','',1.5),T(241,95,'English (U.S.)','',1.5),I(1536,15,15,'minus',.5),T(1577,40,'100%','',1.5),I(1638,15,15,'plusThin',0),I(1688,20,20,'reset',1)]));

/* Taskbar */
define('task-bar',`:host{height:56px;position:relative;background:linear-gradient(90deg,#a5bac1,#a9bcc5 25%,#abbdc8 60%,#a9bdc9 74%,#8eb3ca 80%,#79a9c2);overflow:hidden}
.bg{position:absolute;left:1400px;top:0}.r{position:relative}.who{position:absolute;left:40px;top:12px;color:#fff;font-size:15.500px;text-shadow:1px 1px 2px #333}
.ch{width:83px;height:56px;border:1.500px solid #67767c;border-bottom:0;background:linear-gradient(90deg,#d0dbdf 70px,#8fa2aa 70px 72px,#d5dfe3 72px 76px,#8fa2aa 76px 78px,#d5dfe3 78px);display:flex;align-items:center;padding-left:13px}`,
`<svg class="bg" width="300" height="56"><path d="M19 0L137 56h44L68 0z" fill="#647d92"/><path d="M19 0h49l16 9-31 7z" fill="#667982"/><path d="M68 0l113 56" stroke="#8397ad" stroke-width="2"/></svg>`+
row([I(17,37,36,'win',-.5),I(97,34,40,'doc',2),I(185,34,40,'doc',2),I(268,42,40,'paint',-1.5),I(354,42,42,'store'),I(446,34,40,'doc',2),I(534,34,40,'doc',2),I(617,40,40,'v4'),I(701,46,35,'rar',.5),I(791,42,36,'chip',.5),[856.5,83,'<div class="ch"><ui-icon name="chrome" w="42" h="42"></ui-icon></div>'],I(962,46,46,'edge',0),I(1641,23,23,'tray1',1.5),I(1676,22,24,'tray2',1.5)])+
`<fit-text class="who" w="145">Shinde Namita Kalyan</fit-text>`);

/* Floating windows */
define('share-toast',`:host{position:absolute;left:670px;top:950px;width:582px;height:62px;background:#fff;border:1px solid #c4c1c5;box-shadow:0 2px 3px #999;font-size:16px;color:#55575b}
.r{height:72px;margin-top:-2px}.grip{width:8px;height:18px;border:solid #c5c3c8;border-width:0 2px}.b{width:141px;height:46px;background:#1a73e8;border-radius:4px;color:#e6f1ff;font-weight:600;display:flex;align-items:center;justify-content:center;padding-bottom:4px}.h{color:#4d7bd0}`,
row([[14,8,'<div class="grip"></div>',-2],T(36,325,'teams.microsoft.com is sharing your screen.','',-3),[375,141,'<div class="b"><fit-text w="96">Stop sharing</fit-text></div>',-1.5],T(532,34,'Hide','h',-3)]));
define('call-bar',`:host{position:absolute;left:657px;top:908px;width:606px;height:65px;border-radius:5px;overflow:hidden;background:linear-gradient(90deg,rgba(66,66,66,.97) 346px,rgba(56,56,57,.97) 346px);font-size:18px;color:#a5a5a5;box-shadow:0 2px 12px rgba(0,0,0,.55)}
.sep{width:1px;height:65px;background:#2b2b2b}.red{width:65px;height:65px;background:#9c2f42;display:flex;align-items:center;justify-content:center}.w{color:#fff}`,
row([T(21,43,'34:22','',.5),sep(85),I(105,27,27,'camoff'),I(170,26,27,'micoff'),I(235,27,24,'present'),[300,27,'<ui-icon class="w" name="dots" w="27" h="7"></ui-icon>'],I(367,22,27,'hand'),I(434,21,23,'chat',1),I(497,21,24,'people'),[541,65,'<div class="red"><ui-icon name="hang"></ui-icon></div>']]));
define('call-tile',`:host{position:absolute;left:1695px;top:963px;width:225px;height:117px;background:radial-gradient(circle at 112px 59px,#62609a 20px,#524f7b 42px,#403d55 70px,#393645 105px,#373442);color:#fff;display:flex;flex-direction:column;font-size:16px;overflow:hidden}
.a{margin:24px 0 0 78px;width:69px;height:69px;flex:none;border-radius:50%;border:4.500px solid #9da0f5;padding:3px;background:#25233a}.a div{width:100%;height:100%;border-radius:50%;background:#e7eddd;color:#49612f;font-weight:600;font-size:20px;display:flex;align-items:center;justify-content:center;padding-bottom:1px}.n{margin:4px 0 0 18px;line-height:21px}`,
`<div class="a"><div><fit-text w="26">SK</fit-text></div></div><fit-text class="n" w="146">Shinde Namita Kalyan</fit-text>`);
define('desktop-screen',`:host{position:relative;width:1920px;height:1080px;overflow:hidden;background:#f4f1f5}.cur{position:absolute;left:696px;top:532px}.col{display:flex;flex-direction:column}ribbon-tools{z-index:1}.col>*{flex:none}`,
`<div class="col"><tab-strip></tab-strip><address-bar></address-bar><bookmarks-bar></bookmarks-bar><word-header></word-header><ribbon-tabs></ribbon-tabs><ribbon-tools></ribbon-tools><doc-canvas></doc-canvas><status-bar></status-bar><task-bar></task-bar></div><ui-icon class="cur" name="cursor"></ui-icon><share-toast></share-toast><call-bar></call-bar><call-tile></call-tile>`);
</script>
</body>
</html>
